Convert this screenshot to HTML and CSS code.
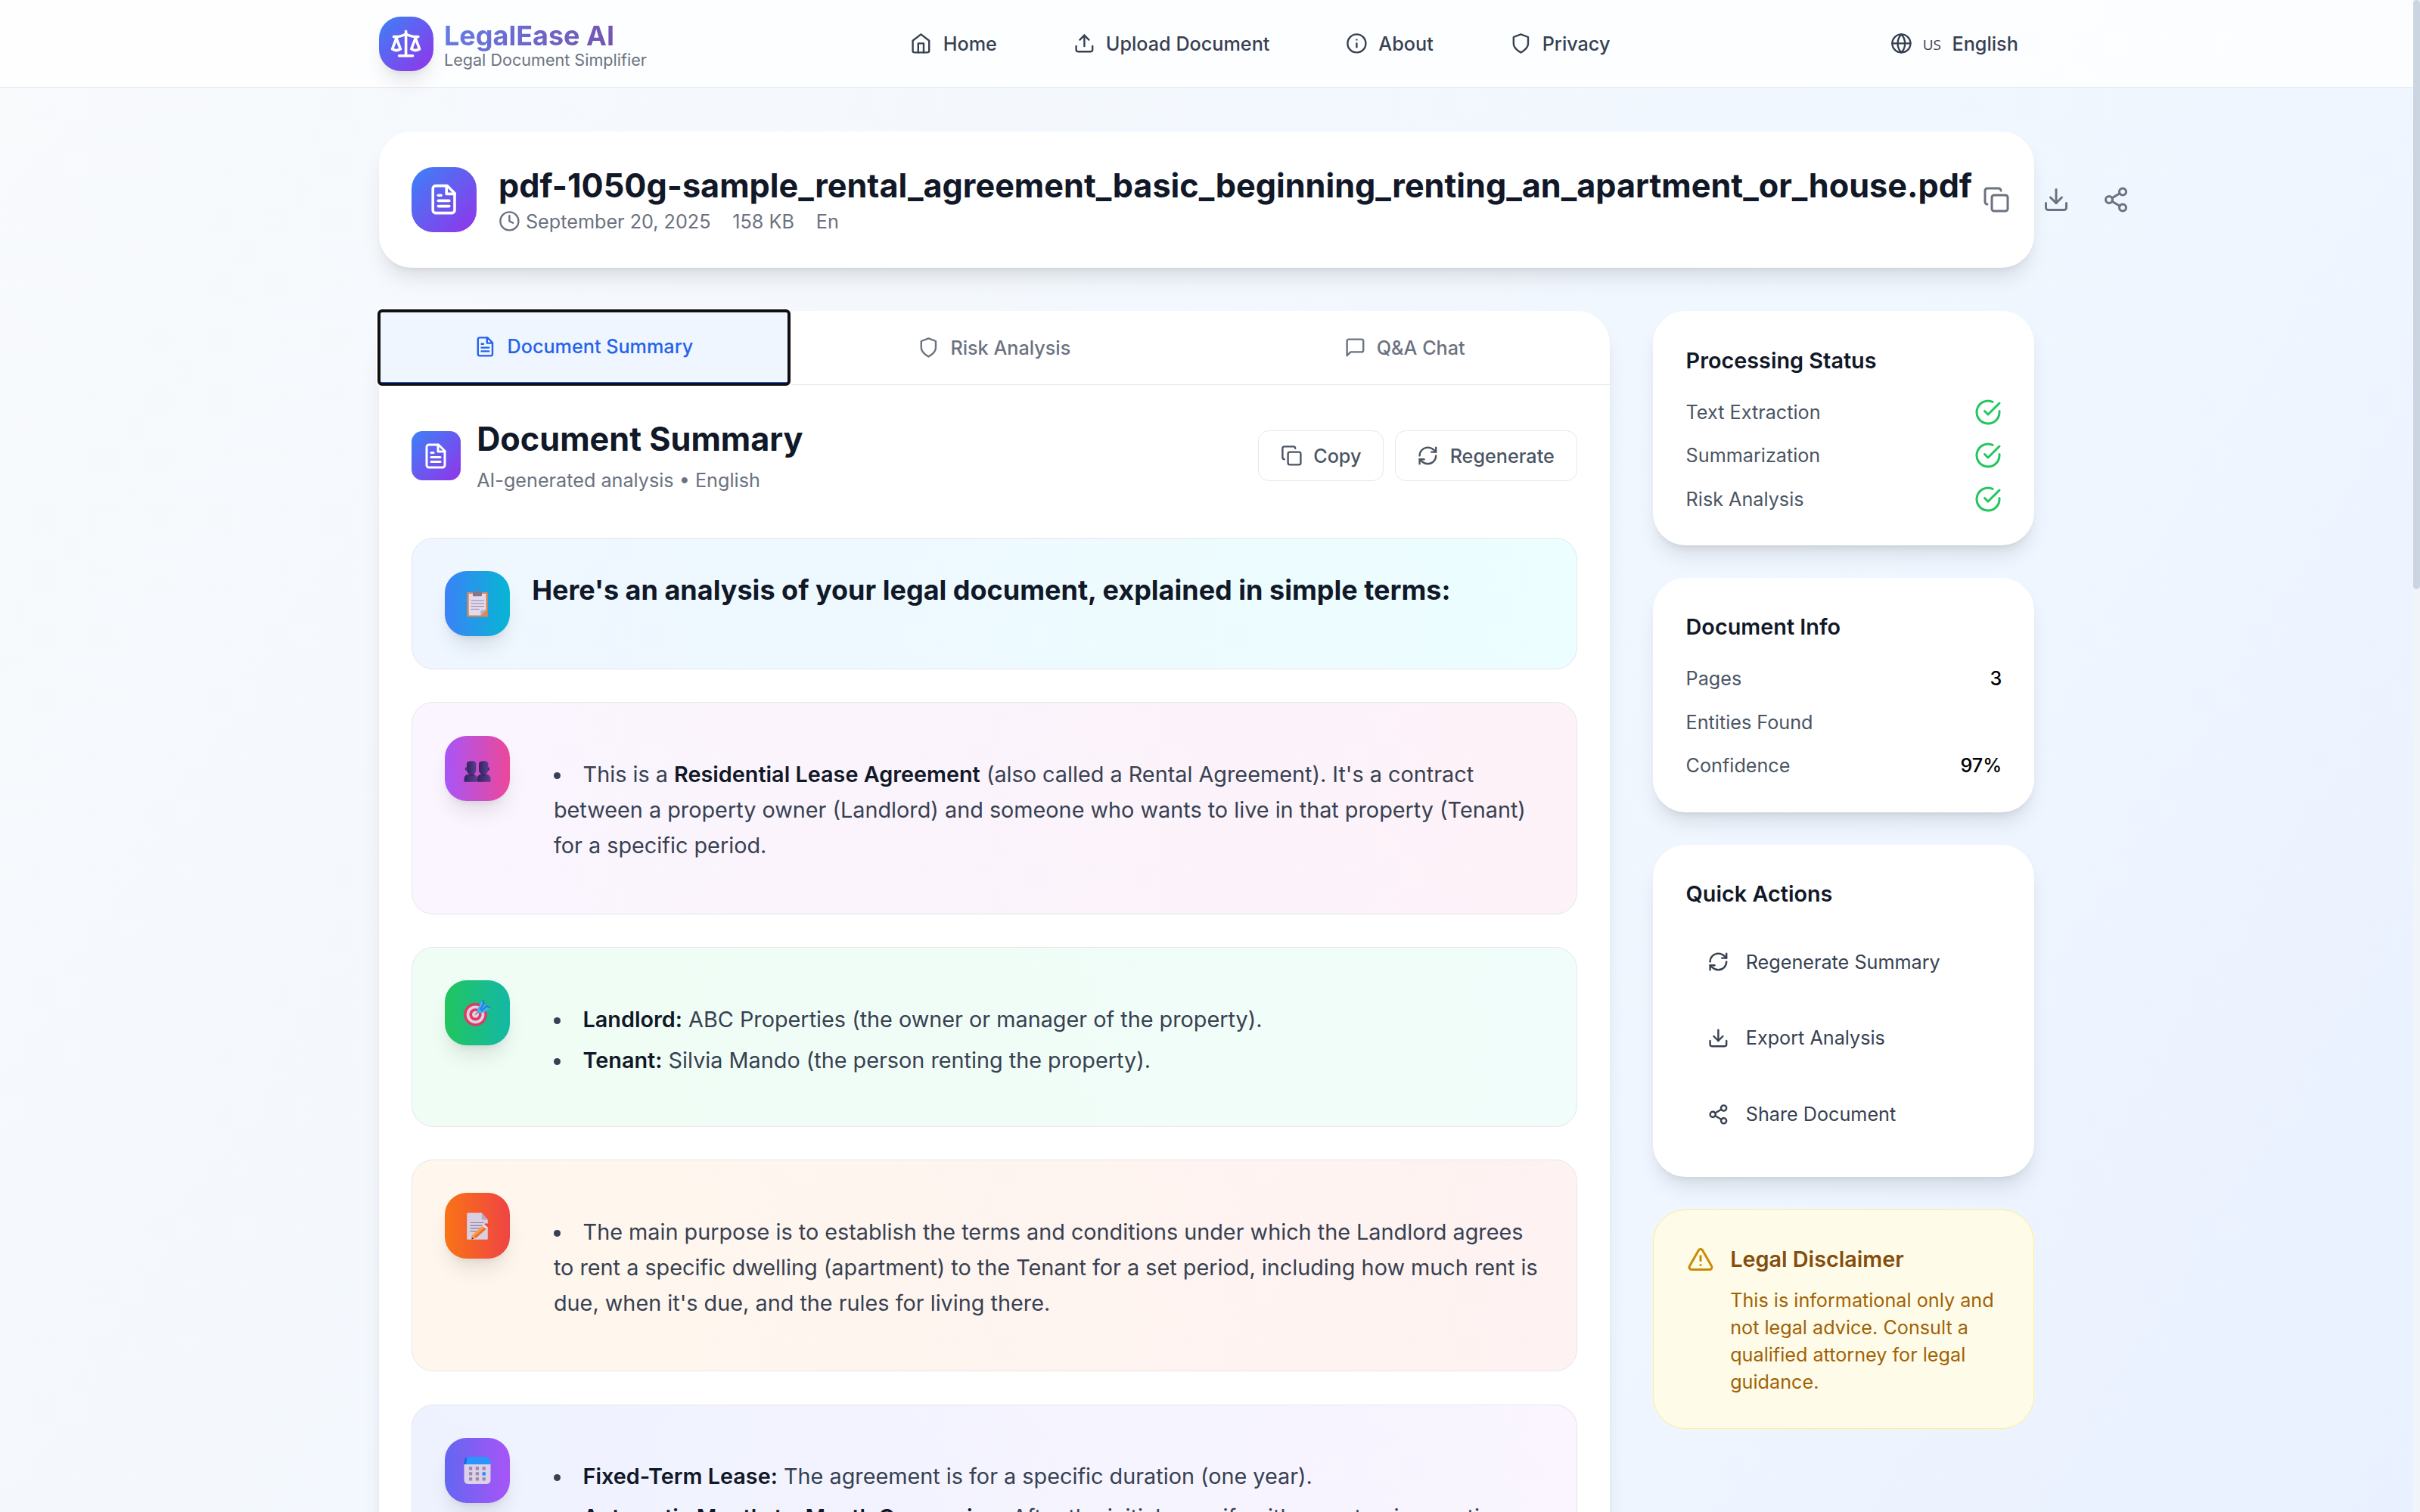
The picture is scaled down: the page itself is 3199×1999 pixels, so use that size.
FILE: index.html
```html
<!DOCTYPE html>
<html lang="en">
<head>
<meta charset="utf-8">
<title>LegalEase AI</title>
<link rel="stylesheet" href="styles.css">
</head>
<body>
<svg class="sprite" aria-hidden="true">
  <symbol id="i-scale" viewBox="0 0 24 24"><path d="m16 16 3-8 3 8c-.87.65-1.92 1-3 1s-2.13-.35-3-1Z"/><path d="m2 16 3-8 3 8c-.87.65-1.92 1-3 1s-2.13-.35-3-1Z"/><path d="M7 21h10"/><path d="M12 3v18"/><path d="M3 7h2c2 0 5-1 7-2 2 1 5 2 7 2h2"/></symbol>
  <symbol id="i-home" viewBox="0 0 24 24"><path d="m3 9 9-7 9 7v11a2 2 0 0 1-2 2H5a2 2 0 0 1-2-2z"/><path d="M9 22V12h6v10"/></symbol>
  <symbol id="i-upload" viewBox="0 0 24 24"><path d="M21 15v4a2 2 0 0 1-2 2H5a2 2 0 0 1-2-2v-4"/><path d="m17 8-5-5-5 5"/><path d="M12 3v12"/></symbol>
  <symbol id="i-info" viewBox="0 0 24 24"><circle cx="12" cy="12" r="10"/><path d="M12 16v-4"/><path d="M12 8h.01"/></symbol>
  <symbol id="i-shield" viewBox="0 0 24 24"><path d="M12 22s8-4 8-10V5l-8-3-8 3v7c0 6 8 10 8 10"/></symbol>
  <symbol id="i-globe" viewBox="0 0 24 24"><circle cx="12" cy="12" r="10"/><path d="M12 2a14.5 14.5 0 0 0 0 20 14.5 14.5 0 0 0 0-20"/><path d="M2 12h20"/></symbol>
  <symbol id="i-file" viewBox="0 0 24 24"><path d="M14.5 2H6a2 2 0 0 0-2 2v16a2 2 0 0 0 2 2h12a2 2 0 0 0 2-2V7.5L14.5 2z"/><path d="M14 2v6h6"/><path d="M16 13H8"/><path d="M16 17H8"/><path d="M10 9H8"/></symbol>
  <symbol id="i-clock" viewBox="0 0 24 24"><circle cx="12" cy="12" r="10"/><path d="M12 6v6l4 2"/></symbol>
  <symbol id="i-copy" viewBox="0 0 24 24"><rect width="14" height="14" x="8" y="8" rx="2"/><path d="M4 16c-1.1 0-2-.9-2-2V4c0-1.1.9-2 2-2h10c1.1 0 2 .9 2 2"/></symbol>
  <symbol id="i-download" viewBox="0 0 24 24"><path d="M21 15v4a2 2 0 0 1-2 2H5a2 2 0 0 1-2-2v-4"/><path d="m7 10 5 5 5-5"/><path d="M12 15V3"/></symbol>
  <symbol id="i-share" viewBox="0 0 24 24"><circle cx="18" cy="5" r="3"/><circle cx="6" cy="12" r="3"/><circle cx="18" cy="19" r="3"/><path d="m8.59 13.51 6.83 3.98"/><path d="m15.41 6.51-6.82 3.98"/></symbol>
  <symbol id="i-chat" viewBox="0 0 24 24"><path d="M21 15a2 2 0 0 1-2 2H7l-4 4V5a2 2 0 0 1 2-2h14a2 2 0 0 1 2 2z"/></symbol>
  <symbol id="i-refresh" viewBox="0 0 24 24"><path d="M3 12a9 9 0 0 1 9-9 9.75 9.75 0 0 1 6.74 2.74L21 8"/><path d="M21 3v5h-5"/><path d="M21 12a9 9 0 0 1-9 9 9.75 9.75 0 0 1-6.74-2.74L3 16"/><path d="M8 16H3v5"/></symbol>
  <symbol id="i-check" viewBox="0 0 24 24"><path d="M22 11.08V12a10 10 0 1 1-5.93-9.14"/><path d="m9 11 3 3L22 4"/></symbol>
  <symbol id="i-alert" viewBox="0 0 24 24"><path d="m21.73 18-8-14a2 2 0 0 0-3.48 0l-8 14A2 2 0 0 0 4 21h16a2 2 0 0 0 1.73-3Z"/><path d="M12 9v4"/><path d="M12 17h.01"/></symbol>
</svg>
<div class="window">
  <div class="page">
    <header class="topbar">
      <div class="container topbar-row">
        <div class="brand">
          <span class="tile tile-40 lift"><svg class="icon s24"><use href="#i-scale"/></svg></span>
          <div>
            <div class="brand-name">LegalEase AI</div>
            <div class="brand-sub">Legal Document Simplifier</div>
          </div>
        </div>
        <nav class="nav">
          <a class="nav-item"><svg class="icon s16"><use href="#i-home"/></svg>Home</a>
          <a class="nav-item"><svg class="icon s16"><use href="#i-upload"/></svg>Upload Document</a>
          <a class="nav-item"><svg class="icon s16"><use href="#i-info"/></svg>About</a>
          <a class="nav-item"><svg class="icon s16"><use href="#i-shield"/></svg>Privacy</a>
        </nav>
        <a class="nav-item"><svg class="icon s16"><use href="#i-globe"/></svg><span class="region">US</span>English</a>
      </div>
    </header>

    <main class="container main">
      <section class="card doc-head">
        <span class="tile tile-48"><svg class="icon s24"><use href="#i-file"/></svg></span>
        <div class="doc-text">
          <h1 class="title">pdf-1050g-sample_rental_agreement_basic_beginning_renting_an_apartment_or_house.pdf</h1>
          <div class="doc-meta">
            <span class="meta-item"><svg class="icon s16"><use href="#i-clock"/></svg>September 20, 2025</span>
            <span>158 KB</span>
            <span>En</span>
          </div>
        </div>
        <div class="doc-actions">
          <svg class="icon s20"><use href="#i-copy"/></svg>
          <svg class="icon s20"><use href="#i-download"/></svg>
          <svg class="icon s20"><use href="#i-share"/></svg>
        </div>
      </section>

      <div class="columns">
        <section class="card panel">
          <div class="tabs">
            <div class="tab tab-active"><svg class="icon s16"><use href="#i-file"/></svg>Document Summary</div>
            <div class="tab"><svg class="icon s16"><use href="#i-shield"/></svg>Risk Analysis</div>
            <div class="tab"><svg class="icon s16"><use href="#i-chat"/></svg>Q&amp;A Chat</div>
          </div>
          <div class="panel-body">
            <div class="panel-head">
              <span class="tile tile-36"><svg class="icon s20"><use href="#i-file"/></svg></span>
              <div class="panel-text">
                <h2 class="title">Document Summary</h2>
                <p class="subtitle">AI-generated analysis • English</p>
              </div>
              <div class="buttons">
                <button class="btn"><svg class="icon s16"><use href="#i-copy"/></svg>Copy</button>
                <button class="btn"><svg class="icon s16"><use href="#i-refresh"/></svg>Regenerate</button>
              </div>
            </div>

            <div class="sections">
              <article class="section tone-blue">
                <span class="badge lift">
                  <svg class="emoji" viewBox="0 0 36 36">
                    <rect x="4.4" y="3" width="27.4" height="32.4" rx="1" fill="#dc8a55"/>
                    <path d="M6.8 5h22.6v21.5l-7 7H8a1.2 1.2 0 0 1-1.2-1.2z" fill="#e4daee"/>
                    <path d="M29.4 26.5h-5.6q-1.4 0-1.4 1.4v5.6z" fill="#b9aec9"/>
                    <path d="M12 3h3.5a2.6 2.6 0 0 1 5.2 0H24v4.2a1 1 0 0 1-1 1H13a1 1 0 0 1-1-1z" fill="#85758f"/>
                    <path d="M9.5 14h17.5M9.5 17.8h17.5M9.5 21.6h17.5M9.5 25.4h11" stroke="#94879f" stroke-width="1"/>
                  </svg>
                </span>
                <h3 class="section-title">Here's an analysis of your legal document, explained in simple terms:</h3>
              </article>

              <article class="section tone-pink">
                <span class="badge lift">
                  <svg class="emoji" viewBox="0 0 36 36">
                    <defs><linearGradient id="head" x1="0" x2="1"><stop offset="0" stop-color="#33235c"/><stop offset="1" stop-color="#5b3d92"/></linearGradient></defs>
                    <g fill="url(#head)">
                      <path d="M4 12.5c0-3.4 2-4.3 6.2-4.3s6.2.9 6.2 4.3v7.3c0 3.5-2.6 6.5-6.2 6.5S4 23.300 4 19.800z"/>
                      <ellipse cx="3.200" cy="18.500" rx="1.300" ry="2.200"/>
                      <path d="M20 12.500c0-3.400 2-4.300 6.200-4.300s6.200.9 6.200 4.300v7.300c0 3.500-2.600 6.500-6.200 6.500S20 23.300 20 19.800z"/>
                      <ellipse cx="33" cy="18.500" rx="1.300" ry="2.200"/>
                      <path d="M.6 35.800v-4.300c0-3.800 2.700-5.700 6-5.700h5c3.600 0 6.100 1.900 6.100 5.700v4.300z"/>
                      <path d="M17.700 35.800v-4.300c0-3.800 2.700-5.700 6-5.700h5.400c3.600 0 6.300 1.900 6.300 5.700v4.300z"/>
                    </g>
                    <path d="M6.500 25.800q4 4.500 8 0M22.300 25.800q4 4.500 8 0" fill="#3a2768"/>
                  </svg>
                </span>
                <ul class="list list-para">
                  <li>This is a <strong>Residential Lease Agreement</strong> (also called a Rental Agreement). It's a contract between a property owner (Landlord) and someone who wants to live in that property (Tenant) for a specific period.</li>
                </ul>
              </article>

              <article class="section tone-green">
                <span class="badge lift">
                  <svg class="emoji" viewBox="0 0 36 36">
                    <circle cx="15.500" cy="20.300" r="15.300" fill="#e5365f"/>
                    <circle cx="15.500" cy="20.300" r="11.900" fill="#dcd2e6"/>
                    <circle cx="15.500" cy="20.300" r="8.100" fill="#e5365f"/>
                    <circle cx="15.500" cy="20.300" r="4.500" fill="#dcd2e6"/>
                    <path d="m15.500 20.300 8-8" stroke="#8b7b99" stroke-width="1.600"/>
                    <path d="m17.800 13.800 7-13.200 2.200 4.600 1.300 3.200 7.200 2.800-8.200 6.400-6.900 1.100q-3-1.400-2.600-4.900z" fill="#43aef0"/>
                    <path d="m25 .6 1.900 4.900-5 8M35.400 11.200l-5-1.900-7.500 6.200" fill="none" stroke="#1c75d6" stroke-width="1.700"/>
                  </svg>
                </span>
                <ul class="list">
                  <li><strong>Landlord:</strong> ABC Properties (the owner or manager of the property).</li>
                  <li><strong>Tenant:</strong> Silvia Mando (the person renting the property).</li>
                </ul>
              </article>

              <article class="section tone-orange">
                <span class="badge lift">
                  <svg class="emoji" viewBox="0 0 36 36">
                    <path d="M5.200.4h18.600l8 9.300v25.100a1 1 0 0 1-1 1H5.200a1 1 0 0 1-1-1V1.400a1 1 0 0 1 1-1z" fill="#d9cfe2"/>
                    <path d="M23.800.4l8 9.300h-6.500q-1.500 0-1.500-1.500z" fill="#b5a9c4"/>
                    <path d="M8.500 13.500h18M8.500 17.300h16M8.500 21.100h14M8.500 24.900h10" stroke="#8f839c" stroke-width="1.200"/>
                    <path d="m10.500 30.500 14-12.700 5.300 4-13.600 12-5.700 1.800z" fill="#ff9a4a"/>
                    <path d="m13.800 31.800 13.500-12 2.500 2-13.600 12z" fill="#e9742f"/>
                    <path d="m24.500 17.800 2.500-2.300 5.200 4.100-2.400 2.200z" fill="#e9e1f2"/>
                    <path d="m27 15.500 1.600-1q2-.7 3.700.9 2 1.600 1.200 3.200l-1.300 1.200z" fill="#f0433f"/>
                    <path d="m10.500 35.600.3-2.800 2.300 2z" fill="#4a2a58"/>
                  </svg>
                </span>
                <ul class="list list-para">
                  <li>The main purpose is to establish the terms and conditions under which the Landlord agrees to rent a specific dwelling (apartment) to the Tenant for a set period, including how much rent is due, when it's due, and the rules for living there.</li>
                </ul>
              </article>

              <article class="section tone-violet">
                <span class="badge lift">
                  <svg class="emoji" viewBox="0 0 36 36">
                    <path d="M.5 9h35v22a5 5 0 0 1-5 5h-25a5 5 0 0 1-5-5z" fill="#ddd0ea"/>
                    <path d="M.5 10V7A7 7 0 0 1 7.500 0h21a7 7 0 0 1 7 7v3z" fill="#2a96fb"/>
                    <path d="M.5 10V7Q.5 2 4.500.8L3 10z" fill="#1b65d8"/>
                    <g fill="#9a8ba8">
                      <path d="M7 13.300h4.200v4.300H7zM15.800 13.300H20v4.300h-4.200zM24.600 13.300h4.200v4.300h-4.200zM7 20.300h4.200v4.300H7zM15.800 20.300H20v4.300h-4.200zM7 27.300h4.200v4.300H7zM15.800 27.300H20v4.300h-4.200zM24.600 27.300h4.200v4.300h-4.200z"/>
                    </g>
                    <path d="M24.600 20.300h4.200v4.300h-4.200z" fill="#1f8df5"/>
                  </svg>
                </span>
                <ul class="list">
                  <li><strong>Fixed-Term Lease:</strong> The agreement is for a specific duration (one year).</li>
                  <li><strong>Automatic Month-to-Month Conversion:</strong> After the initial year, if neither party gives notice,</li>
                </ul>
              </article>
            </div>
          </div>
        </section>

        <aside class="side">
          <section class="card side-card">
            <h3 class="side-title">Processing Status</h3>
            <div class="rows">
              <div class="row"><span>Text Extraction</span><svg class="icon s20 ok"><use href="#i-check"/></svg></div>
              <div class="row"><span>Summarization</span><svg class="icon s20 ok"><use href="#i-check"/></svg></div>
              <div class="row"><span>Risk Analysis</span><svg class="icon s20 ok"><use href="#i-check"/></svg></div>
            </div>
          </section>
          <section class="card side-card">
            <h3 class="side-title">Document Info</h3>
            <div class="rows">
              <div class="row"><span>Pages</span><span class="value">3</span></div>
              <div class="row"><span>Entities Found</span></div>
              <div class="row"><span>Confidence</span><span class="value">97%</span></div>
            </div>
          </section>
          <section class="card side-card">
            <h3 class="side-title">Quick Actions</h3>
            <div class="rows">
              <div class="action"><svg class="icon s16"><use href="#i-refresh"/></svg>Regenerate Summary</div>
              <div class="action"><svg class="icon s16"><use href="#i-download"/></svg>Export Analysis</div>
              <div class="action"><svg class="icon s16"><use href="#i-share"/></svg>Share Document</div>
            </div>
          </section>
          <section class="notice">
            <svg class="icon s20 notice-icon"><use href="#i-alert"/></svg>
            <div>
              <h3 class="notice-title">Legal Disclaimer</h3>
              <p class="notice-text">This is informational only and not legal advice. Consult a qualified attorney for legal guidance.</p>
            </div>
          </section>
        </aside>
      </div>
    </main>
  </div>
  <div class="scrollbar"><div class="thumb"></div></div>
</div>
</body>
</html>
```
FILE: styles.css
```css
:root {
  font-size: 28.8px;
  --lift: 0 18px 27px -5.4px rgba(0, 0, 0, 0.1), 0 7.2px 10.8px -7.2px rgba(0, 0, 0, 0.1);
}

* { box-sizing: border-box; }

body, h1, h2, h3, p, ul { margin: 0; padding: 0; }

body {
  font-family: Inter, "Liberation Sans", sans-serif;
  line-height: 1.5;
  color: #000;
  overflow: hidden;
}

.sprite { display: none; }

.window {
  display: flex;
  height: 1999px;
  overflow: hidden;
}

.page {
  flex: 1;
  min-width: 0;
  height: 5130px;
  background: linear-gradient(to bottom right, #f8fafc, #eff6ff, #e0e7ff);
}

.scrollbar { width: 9px; background: #f1f5f9; }
.thumb { height: 779px; border-radius: 5px; background: #cbd5e1; }

.container {
  width: 80rem;
  margin: 0 auto;
  padding: 0 2rem;
}

.icon {
  flex: none;
  fill: none;
  stroke: currentColor;
  stroke-width: 2;
  stroke-linecap: round;
  stroke-linejoin: round;
}
.s16 { width: 1rem; height: 1rem; }
.s20 { width: 1.25rem; height: 1.25rem; }
.s24 { width: 1.5rem; height: 1.5rem; }

.tile {
  flex: none;
  display: flex;
  align-items: center;
  justify-content: center;
  color: #fff;
  background: linear-gradient(to bottom right, #3b82f6, #9333ea);
}
.tile-36 { width: 2.25rem; height: 2.25rem; border-radius: 0.5rem; }
.tile-40 { width: 2.5rem; height: 2.5rem; border-radius: 1rem; }
.tile-48 { width: 3rem; height: 3rem; border-radius: 1rem; }
.lift { box-shadow: var(--lift); }

.topbar {
  height: 116px;
  background: rgba(255, 255, 255, 0.8);
  border-bottom: 1px solid #e9ebef;
}
.topbar-row {
  display: flex;
  align-items: center;
  justify-content: space-between;
  height: 4rem;
}
.brand { display: flex; align-items: center; gap: 0.5rem; }
.brand-name {
  font-size: 1.25rem;
  line-height: 1.75rem;
  font-weight: 700;
  color: transparent;
  background: linear-gradient(135deg, #667eea, #764ba2);
  background-clip: text;
}
.brand-sub {
  margin-top: -0.25rem;
  font-size: 0.75rem;
  line-height: 1rem;
  color: #6b7280;
}
.nav { display: flex; gap: 2rem; }
.nav-item {
  display: flex;
  align-items: center;
  gap: 0.5rem;
  padding: 0.5rem 0.75rem;
  font-size: 0.875rem;
  line-height: 1.25rem;
  font-weight: 500;
  color: #374151;
}
.region {
  font-family: "Open Sans", sans-serif;
  font-weight: 400;
  font-size: 19px;
  padding-top: 3px;
}

.main { padding-top: 57.8px; }

.card {
  background: #fff;
  border-radius: 1.5rem;
  box-shadow: var(--lift);
}

.title {
  font-size: 1.5rem;
  line-height: 2rem;
  font-weight: 700;
  color: #111827;
}

.doc-head {
  display: flex;
  align-items: center;
  margin-bottom: 2rem;
  padding: 1.5rem;
}
.doc-text { flex: none; margin-left: 1rem; }
.doc-meta {
  display: flex;
  gap: 1rem;
  font-size: 0.875rem;
  line-height: 1.25rem;
  color: #6b7280;
}
.meta-item { display: flex; align-items: center; gap: 0.25rem; }
.doc-actions {
  display: flex;
  gap: 43px;
  padding: 0.5rem 0.5rem 0.5rem 14px;
  color: #6b7280;
}

.columns {
  display: grid;
  grid-template-columns: repeat(4, minmax(0, 1fr));
  gap: 2rem;
  align-items: start;
}
.panel { grid-column: span 3; }

.tabs { display: flex; border-bottom: 1px solid #e5e7eb; }
.tab {
  flex: 1;
  display: flex;
  align-items: center;
  justify-content: center;
  gap: 0.5rem;
  padding: 1rem;
  font-size: 0.875rem;
  line-height: 1.25rem;
  font-weight: 500;
  color: #6b7280;
}
.tab-active {
  color: #2563eb;
  background: #eff6ff;
  border-bottom: 3px solid #2563eb;
  border-radius: 4px;
  outline: 4px solid #101010;
  outline-offset: -2px;
  box-shadow: 0 0 0 4px #fff;
}

.panel-body { padding: 1.5rem; }
.panel-head {
  display: flex;
  align-items: center;
  margin-bottom: 2rem;
}
.panel-text { flex: 1; margin-left: 0.75rem; }
.subtitle {
  margin-top: 0.25rem;
  font-size: 0.875rem;
  line-height: 1.25rem;
  color: #6b7280;
}
.buttons { display: flex; gap: 0.5rem; }
.btn {
  display: flex;
  align-items: center;
  gap: 0.5rem;
  padding: 0.5rem 1rem;
  border: 1px solid #e5e7eb;
  border-radius: 0.5rem;
  background: #fff;
  font: 500 0.875rem/1.25rem Inter, sans-serif;
  color: #4b5563;
}

.sections { display: flex; flex-direction: column; gap: 1.5rem; }
.section {
  display: flex;
  align-items: flex-start;
  gap: 1rem;
  padding: 1.5rem;
  border: 1px solid #e5e7eb;
  border-radius: 1rem;
}
.badge {
  flex: none;
  display: flex;
  align-items: center;
  justify-content: center;
  width: 3rem;
  height: 3rem;
  border-radius: 1rem;
}
.emoji { width: 36px; height: 36px; }

.tone-blue { background: linear-gradient(to right, #eff6ff, #ecfeff); }
.tone-blue .badge { background: linear-gradient(to right, #3b82f6, #06b6d4); }
.tone-pink { background: linear-gradient(to right, #faf5ff, #fdf2f8); }
.tone-pink .badge { background: linear-gradient(to right, #a855f7, #ec4899); }
.tone-green { background: linear-gradient(to right, #f0fdf4, #f0fdfa); }
.tone-green .badge { background: linear-gradient(to right, #22c55e, #14b8a6); }
.tone-orange { background: linear-gradient(to right, #fff7ed, #fef2f2); }
.tone-orange .badge { background: linear-gradient(to right, #f97316, #ef4444); }
.tone-violet { background: linear-gradient(to right, #eef2ff, #faf5ff); }
.tone-violet .badge { background: linear-gradient(to right, #6366f1, #a855f7); }

.section-title {
  font-size: 1.25rem;
  line-height: 1.75rem;
  font-weight: 700;
  color: #111827;
}

.list {
  flex: 1;
  min-width: 0;
  padding: 28.6px 0 20.6px 1rem;
  list-style: none;
  font-size: 1rem;
  line-height: 1.625;
  color: #374151;
}
.list-para { padding-bottom: 22.8px; }
.list li + li { margin-top: 0.25rem; }
.list li::before {
  content: "";
  display: inline-block;
  width: 9px;
  height: 9px;
  margin-right: 29.6px;
  border-radius: 50%;
  background: currentColor;
  vertical-align: 4px;
}
.list strong { font-weight: 600; color: #111827; }

.side { display: flex; flex-direction: column; gap: 1.5rem; }
.side-card { padding: 1.5rem; }
.side-title {
  margin-bottom: 1rem;
  font-size: 1rem;
  line-height: 1.5rem;
  font-weight: 600;
  color: #111827;
}
.rows { display: flex; flex-direction: column; gap: 0.75rem; }
.row {
  display: flex;
  align-items: center;
  justify-content: space-between;
  font-size: 0.875rem;
  line-height: 1.25rem;
  color: #4b5563;
}
.value { font-weight: 500; color: #000; }
.ok { color: #22c55e; }
.action {
  display: flex;
  align-items: center;
  gap: 0.75rem;
  padding: 0.75rem 1rem;
  font-size: 0.875rem;
  line-height: 1.25rem;
  color: #374151;
}

.notice {
  display: flex;
  align-items: flex-start;
  gap: 0.75rem;
  padding: 1.5rem;
  border: 1px solid #fef08a;
  border-radius: 1.5rem;
  background: #fefce8;
}
.notice-icon { margin-top: 0.125rem; color: #ca8a04; }
.notice-title {
  margin-bottom: 0.5rem;
  font-size: 1rem;
  line-height: 1.5rem;
  font-weight: 600;
  color: #854d0e;
}
.notice-text {
  font-size: 0.875rem;
  line-height: 1.25rem;
  color: #a16207;
}
```
